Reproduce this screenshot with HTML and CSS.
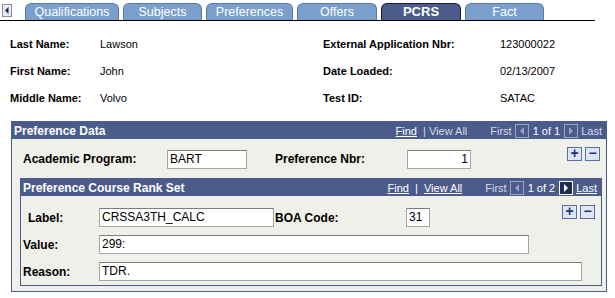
FILE: index.html
```html
<!DOCTYPE html>
<html>
<head>
   <title>PCRS</title>
   <link rel="stylesheet" href="styles.css">
</head>
<body>
   <div class="page">
       <nav class="tabs">
           <span class="tab-scroll">
               <svg width="10" height="13" viewBox="0 0 10 13">
                   <rect x="0.5" y="0.5" width="9" height="12" fill="#e8ecf4" stroke="#8a8f9c"/>
                   <polygon points="6.5,3 6.5,10 3,6.5" fill="#1c2a50"/>
               </svg>
           </span>
           <a class="tab" style="width:94px">Qualifications</a>
           <a class="tab" style="width:79px">Subjects</a>
           <a class="tab" style="width:87px">Preferences</a>
           <a class="tab" style="width:80px">Offers</a>
           <a class="tab active" style="width:80px">PCRS</a>
           <a class="tab" style="width:79px">Fact</a>
       </nav>

       <div class="summary">
           <span class="lbl">Last Name:</span><span class="val">Lawson</span>
           <span class="lbl">External Application Nbr:</span><span class="val">123000022</span>
           <span class="lbl">First Name:</span><span class="val">John</span>
           <span class="lbl">Date Loaded:</span><span class="val">02/13/2007</span>
           <span class="lbl">Middle Name:</span><span class="val">Volvo</span>
           <span class="lbl">Test ID:</span><span class="val">SATAC</span>
       </div>

       <section class="scroll-box outer">
           <div class="box-head">
               <span class="box-title">Preference Data</span>
               <span class="box-nav">
                   <a class="link">Find</a><span class="dim"> | View All</span>
                   <span class="dim first">First</span>
                   <span class="nav-btn">
                       <svg width="14" height="14" viewBox="0 0 14 14"><rect x="0.5" y="0.5" width="13" height="13" fill="none" stroke="#9aa3c0"/><polygon points="9,3 9,11 5,7" fill="#9aa3c0"/></svg>
                   </span>
                   <span class="count">1 of 1</span>
                   <span class="nav-btn">
                       <svg width="14" height="14" viewBox="0 0 14 14"><rect x="0.5" y="0.5" width="13" height="13" fill="none" stroke="#9aa3c0"/><polygon points="5,3 5,11 9,7" fill="#9aa3c0"/></svg>
                   </span>
                   <span class="dim">Last</span>
               </span>
           </div>
           <div class="box-body">
               <div class="row row-pref">
                   <span class="lbl label-prog">Academic Program:</span>
                   <span class="field" style="width:80px">BART</span>
                   <span class="lbl label-nbr">Preference Nbr:</span>
                   <span class="field num" style="width:64px">1</span>
                   <span class="row-btns">
                       <span class="pm">+</span><span class="pm">&minus;</span>
                   </span>
               </div>

               <section class="scroll-box inner">
                   <div class="box-head">
                       <span class="box-title">Preference Course Rank Set</span>
                       <span class="box-nav">
                           <a class="link">Find</a> | <a class="link">View All</a>
                           <span class="dim first">First</span>
                           <span class="nav-btn">
                               <svg width="14" height="14" viewBox="0 0 14 14"><rect x="0.5" y="0.5" width="13" height="13" fill="none" stroke="#9aa3c0"/><polygon points="9,3 9,11 5,7" fill="#9aa3c0"/></svg>
                           </span>
                           <span class="count">1 of 2</span>
                           <span class="nav-btn">
                               <svg width="14" height="14" viewBox="0 0 14 14"><rect x="0" y="0" width="14" height="14" fill="#1d2b55"/><rect x="0.5" y="0.5" width="13" height="13" fill="none" stroke="#ffffff"/><polygon points="5,3 5,11 9,7" fill="#ffffff"/></svg>
                           </span>
                           <a class="link">Last</a>
                       </span>
                   </div>
                   <div class="box-body">
                       <div class="row row-label">
                           <span class="lbl label-short">Label:</span>
                           <span class="field" style="width:175px">CRSSA3TH_CALC</span>
                           <span class="lbl label-boa">BOA Code:</span>
                           <span class="field" style="width:24px">31</span>
                           <span class="row-btns">
                               <span class="pm">+</span><span class="pm">&minus;</span>
                           </span>
                       </div>
                       <div class="row">
                           <span class="lbl label-wide">Value:</span>
                           <span class="field" style="width:430px">299:</span>
                       </div>
                       <div class="row">
                           <span class="lbl label-wide">Reason:</span>
                           <span class="field" style="width:483px">TDR.</span>
                       </div>
                   </div>
               </section>
           </div>
       </section>
   </div>
</body>
</html>
```

FILE: styles.css
```css
* {
    margin: 0;
    padding: 0;
    box-sizing: border-box;
}

body {
    font-family: 'Liberation Sans', Arial, sans-serif;
    background: #FFFFFF;
    color: #000000;
    width: 615px;
    height: 298px;
    overflow: hidden;
}

.page {
    padding-top: 2px;
}

/* tab strip */
.tabs {
    display: flex;
    align-items: flex-end;
    gap: 4px;
    height: 19px;
    width: 595px;
    border-bottom: 1px solid #000000;
}

.tab-scroll {
    display: flex;
    margin: 0 9px 2px 2px;
    height: 15px;
    align-items: center;
}

.tab {
    height: 17px;
    background: #7b9fcd;
    border: 1px solid #5c7aa8;
    border-bottom: none;
    border-radius: 6px 6px 0 0;
    color: #FFFFFF;
    font-size: 12.5px;
    line-height: 16px;
    text-align: center;
}

.tab.active {
    background: #4b5b8c;
    border-color: #1a1a2e;
    font-weight: 700;
    font-size: 13px;
}

/* summary fields */
.summary {
    display: grid;
    grid-template-columns: 90px 223px 177px auto;
    grid-template-rows: repeat(3, 27px);
    align-items: center;
    padding: 9px 0 0 10px;
    height: 100px;
}

.lbl {
    font-weight: 700;
    font-size: 11px;
}

.val {
    font-size: 11px;
}

/* scroll areas */
.scroll-box {
    border: 1px solid #4b5b8c;
    background: #f0f0ea;
}

.outer {
    margin-left: 11px;
    width: 596px;
    height: 171px;
}

.inner {
    margin: 5px 0 0 8px;
    width: 582px;
    height: 108px;
}

.box-head {
    display: flex;
    justify-content: space-between;
    align-items: center;
    height: 17px;
    background: #4b5b8c;
    padding: 0 4px 0 2px;
    color: #FFFFFF;
}

.box-title {
    font-weight: 700;
    font-size: 12px;
}

.box-nav {
    display: flex;
    align-items: center;
    gap: 3px;
    font-size: 11px;
    white-space: pre;
}

.link {
    color: #FFFFFF;
    text-decoration: underline;
}

.dim {
    color: #d6d9e6;
}

.first {
    margin-left: 20px;
}

.nav-btn {
    display: flex;
}

.count {
    margin: 0 1px;
}

.box-body {
    position: relative;
}

.row {
    display: flex;
    align-items: center;
    height: 27px;
}

.row-pref {
    height: 34px;
    padding-top: 6px;
}

.row-label {
    height: 35px;
    padding-top: 8px;
}

.field {
    height: 19px;
    background: #FFFFFF;
    border: 1px solid #a6a6a6;
    border-top-color: #7c7c7c;
    font-size: 12px;
    line-height: 17px;
    padding: 0 2px;
    white-space: nowrap;
}

.field.num {
    text-align: right;
}

.label-prog {
    width: 155px;
    padding-left: 11px;
    font-size: 12px;
}

.label-nbr {
    width: 160px;
    padding-left: 28px;
    font-size: 12px;
}

.label-short {
    width: 78px;
    padding-left: 7px;
    font-size: 12px;
}

.label-wide {
    width: 78px;
    padding-left: 2px;
    font-size: 12px;
}

.label-boa {
    width: 132px;
    padding-left: 1px;
    font-size: 12px;
}

.row-btns {
    position: absolute;
    right: 6px;
    top: 8px;
    display: flex;
    gap: 3px;
}

.inner .row-btns {
    right: 6px;
    top: 9px;
}

.pm {
    width: 15px;
    height: 14px;
    background: #dce6f6;
    border: 1px solid #5b6ea3;
    color: #26356b;
    font-weight: 700;
    font-size: 14px;
    line-height: 11px;
    text-align: center;
}
```
